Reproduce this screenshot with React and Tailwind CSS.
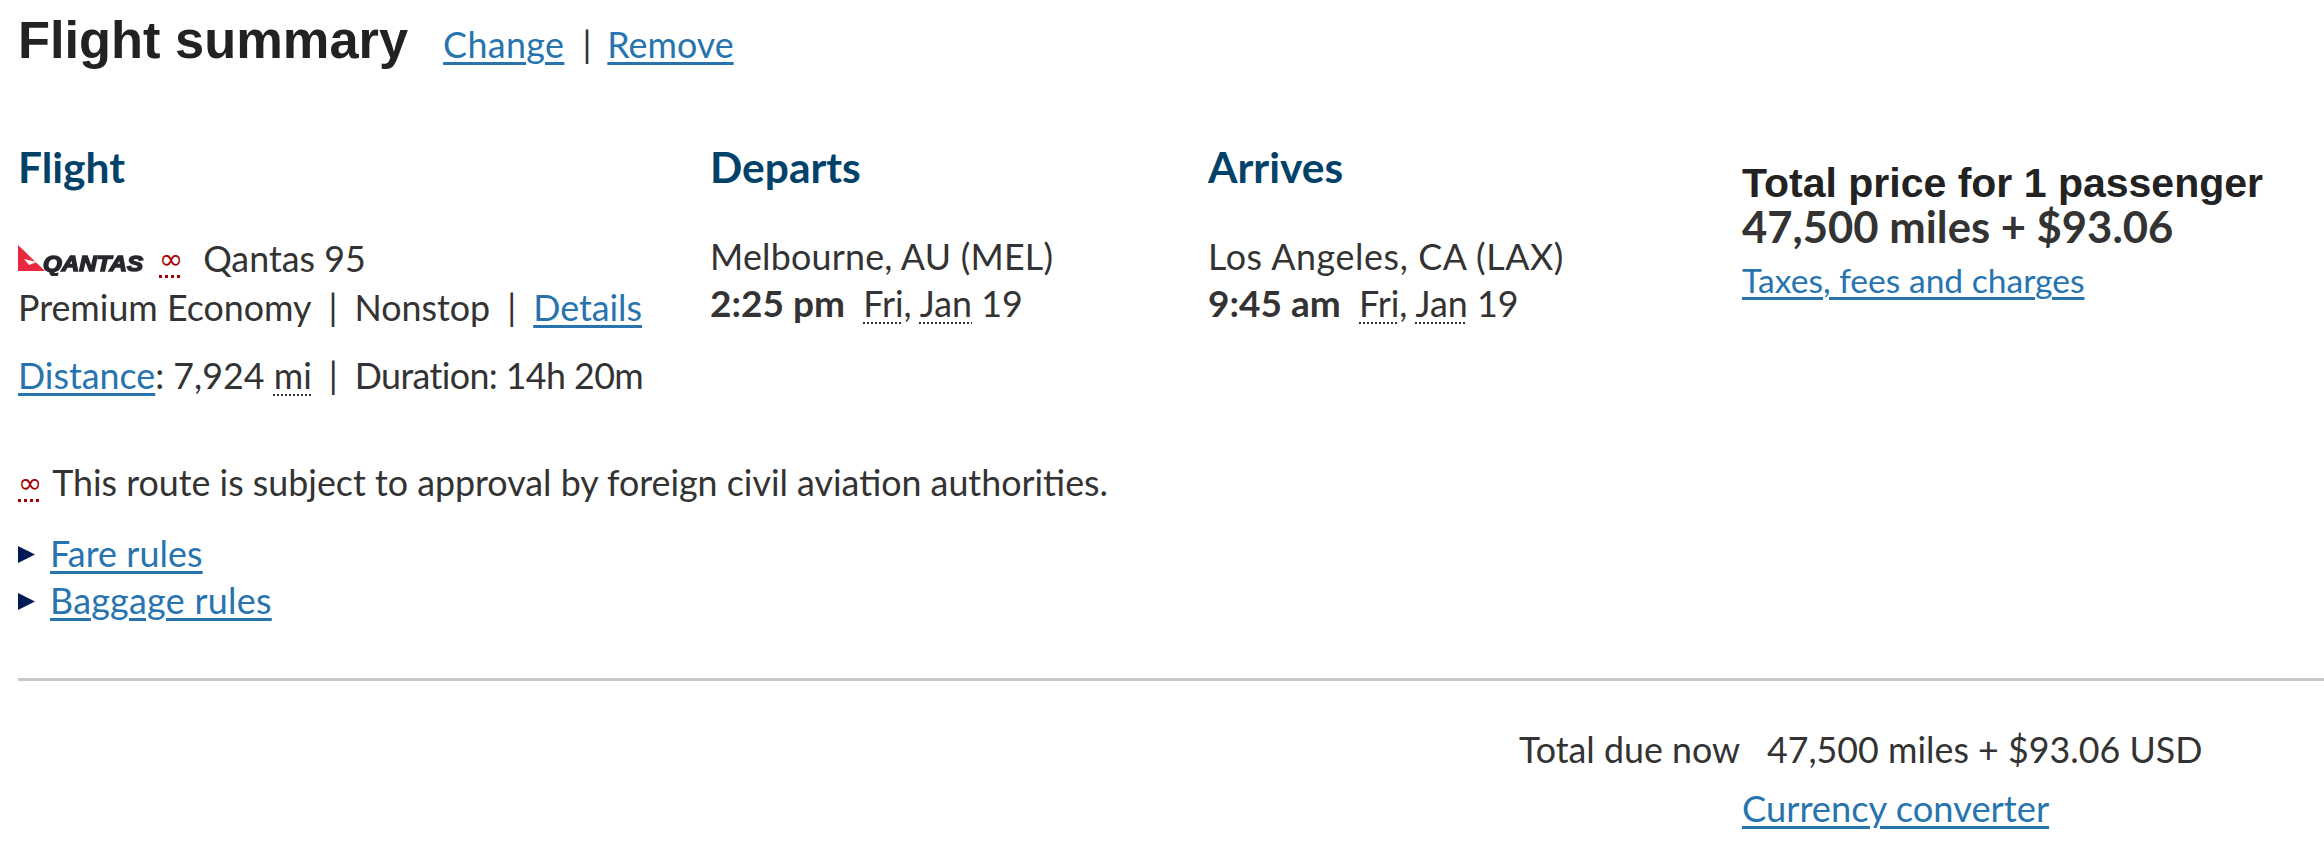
const link = 'text-[#2774ae] underline decoration-[3px] underline-offset-[4px]';
const abbr = 'underline decoration-dotted decoration-2 underline-offset-[5px]';
const head = 'text-[42.5px] font-bold leading-[44px] text-[#01426a]';

function QantasLogo() {
  return (
    <svg width="130" height="34" viewBox="0 -2 130 34" className="shrink-0 blur-[0.6px]">
      <path d="M0 1 L27 27 L0 27 Z" fill="#e9283f" />
      <path d="M6 15 L19 18 L11 21 Z" fill="#fff" />
      <text x="25" y="27" fontFamily="Liberation Sans" fontWeight="bold" fontStyle="italic" fontSize="22" textLength="100" lengthAdjust="spacingAndGlyphs" fill="#26272b" stroke="#26272b" strokeWidth="1.5">QANTAS</text>
    </svg>
  );
}

function InfinityMark() {
  return <span className="font-['DejaVu_Sans',sans-serif] text-[#a30000] underline decoration-dotted decoration-[3px] underline-offset-[6px] text-[29px] leading-none">∞</span>;
}

function Triangle() {
  return (
    <svg width="18" height="17" viewBox="0 0 18 17" className="shrink-0">
      <path d="M0 0 L17 8.5 L0 17 Z" fill="#001b54" />
    </svg>
  );
}

function Sep() {
  return <span className="mx-[17px]">|</span>;
}

export default function App() {
  return (
    <div className="w-[2324px] h-[854px] overflow-hidden bg-white pl-[18px] text-[35.8px] leading-[46px] text-[#333] font-['Lato','Noto_Sans',sans-serif]">
      <div className="flex items-baseline h-[70px] pt-[2px]">
        <h1 className="font-['Liberation_Sans',sans-serif] text-[52.4px] font-bold leading-[76px] text-[#222]">Flight summary</h1>
        <a className={`${link} ml-[35px] tracking-[0.4px]`}>Change</a>
        <span className="ml-[18px] mr-[16px]">|</span>
        <a className={link}>Remove</a>
      </div>

      <div className="grid grid-cols-[692px_498px_534px_1fr] pt-[75px]">
        <div>
          <h2 className={head}>Flight</h2>
          <div className="flex items-center gap-[11px] mt-[47px] h-[46px]">
            <QantasLogo />
            <InfinityMark />
            <span className="ml-[9px]">Qantas 95</span>
          </div>
          <div className="mt-[3px]">Premium Economy<Sep />Nonstop<Sep /><a className={link}>Details</a></div>
          <div className="mt-[22px]"><a className={link}>Distance</a>: 7,924 <span className={abbr}>mi</span><Sep /><span className="tracking-[-0.6px]">Duration: 14h 20m</span></div>
        </div>
        <div>
          <h2 className={head}>Departs</h2>
          <div className="mt-[45px] tracking-[0.23px]">Melbourne, AU (MEL)</div>
          <div><b className="text-[37px]">2:25 pm</b>&nbsp; <span className={abbr}>Fri</span>, <span className={abbr}>Jan</span> 19</div>
        </div>
        <div>
          <h2 className={head}>Arrives</h2>
          <div className="mt-[45px] tracking-[0.6px]">Los Angeles, CA (LAX)</div>
          <div><b className="text-[37px]">9:45 am</b>&nbsp; <span className={abbr}>Fri</span>, <span className={abbr}>Jan</span> 19</div>
        </div>
        <div className="pt-[17px]">
          <div className="font-['Liberation_Sans',sans-serif] text-[41px] font-bold leading-[43px] text-[#222]">Total price for 1 passenger</div>
          <div className="text-[43.6px] font-bold leading-[43px]">47,500 miles + $93.06</div>
          <a className={`${link} block w-fit mt-[9px] text-[33.6px]`}>Taxes, fees and charges</a>
        </div>
      </div>

      <div className="flex items-center gap-[10px] mt-[61px]"><InfinityMark /><span>This route is subject to approval by foreign civil aviation authorities.</span></div>

      <div className="flex items-center gap-[14px] mt-[25px]"><Triangle /><a className={`${link} tracking-[0.1px]`}>Fare rules</a></div>
      <div className="flex items-center gap-[14px] mt-[1px]"><Triangle /><a className={`${link} tracking-[0.3px]`}>Baggage rules</a></div>

      <div className="border-t-[3px] border-[#c8c8c8] mt-[54px]" />

      <div className="ml-[1501px] mt-[46px]">
        <div>Total due now &nbsp; 47,500 miles + $93.06 USD</div>
        <a className={`${link} block w-fit ml-[223px] mt-[12px] text-[36.3px]`}>Currency converter</a>
      </div>
    </div>
  );
}
